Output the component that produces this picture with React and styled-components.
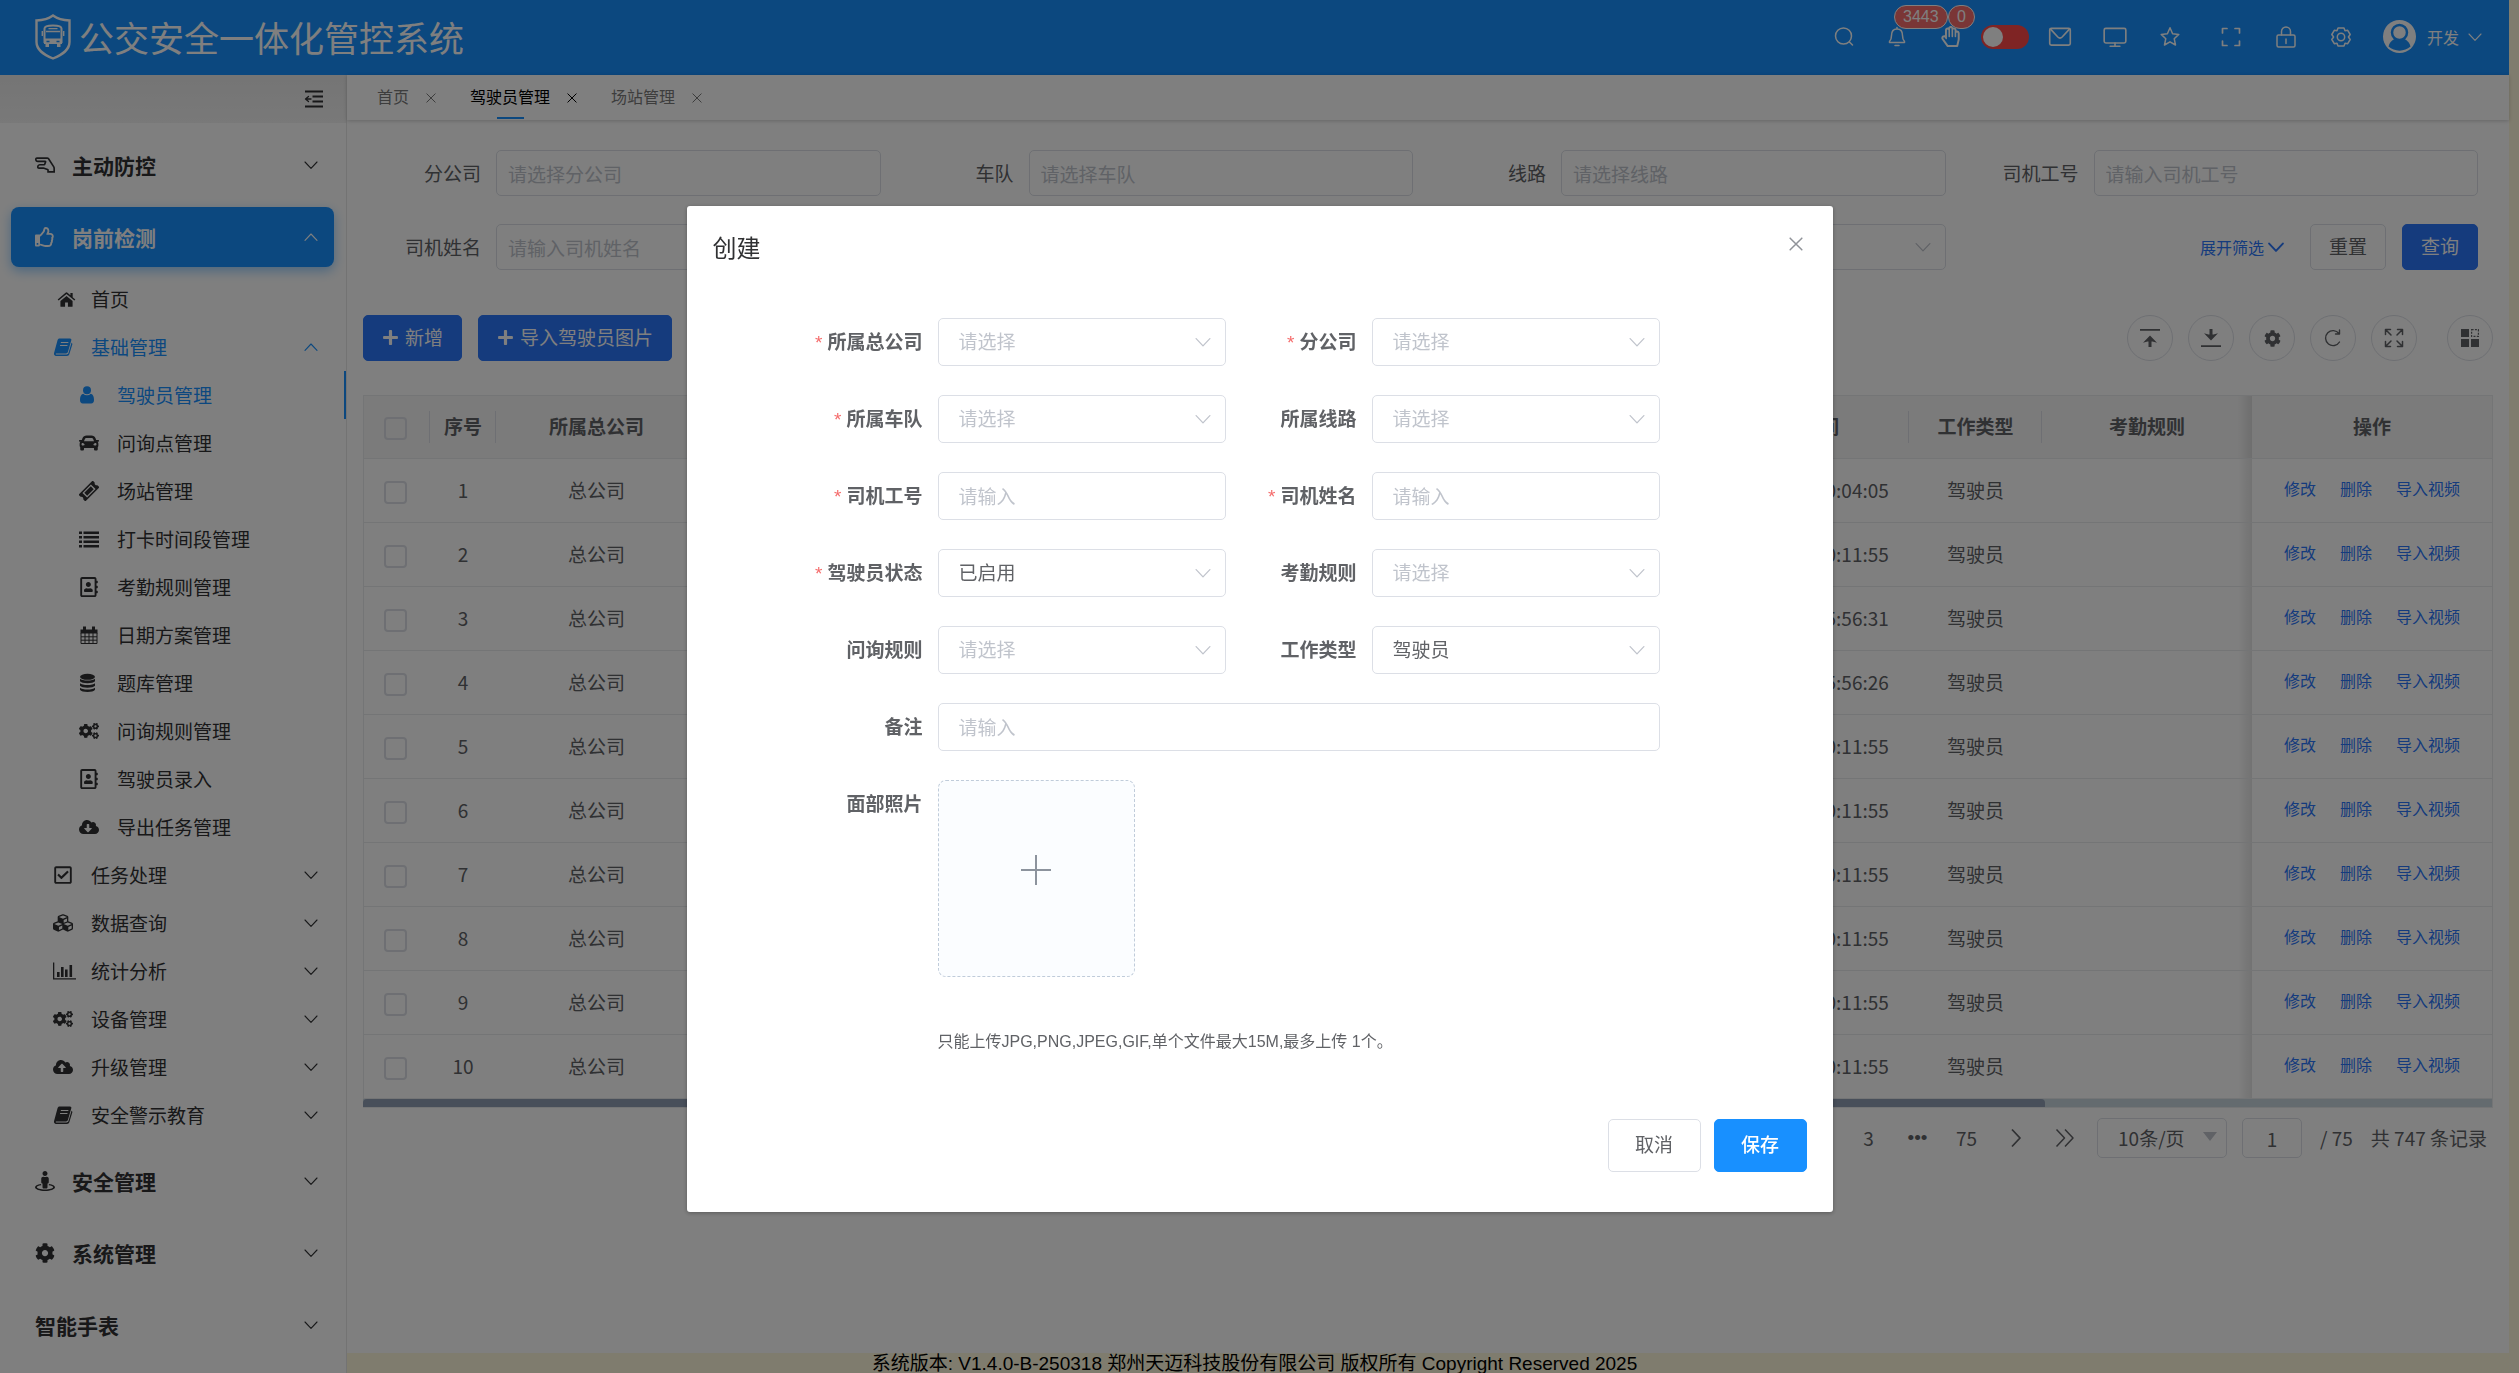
import React from "react";
import styled, { createGlobalStyle, css } from "styled-components";
import {
  FaCar, FaCogs, FaCog, FaCubes, FaStreetView, FaPlus,
  FaRegAddressBook, FaRegCheckSquare, FaRegHandLizard, FaRegHandPaper,
  FaRegThumbsUp, FaCloudDownloadAlt, FaCloudUploadAlt,
} from "react-icons/fa";

const blue = "#1890ff";
const royal = "#2a76fa";
const cjk = '"Noto Sans CJK SC", sans-serif';
const latin = '"Liberation Sans", "Noto Sans CJK SC", sans-serif';

const GlobalStyle = createGlobalStyle`
  *, *::before, *::after { box-sizing: border-box; }
  body { margin: 0; background: cornsilk; font: 19px/24px ${cjk}; color: #606266; overflow: hidden; }
  button, input, select { font: inherit; color: inherit; margin: 0; }
  button { cursor: pointer; padding: 0; border: 0; background: none; }
  a { text-decoration: none; color: inherit; }
  svg { display: block; flex: none; }
`;

/* ---------- icons ---------- */

const Line = ({ size = 24, width = 1.5, view = 24, children }) => (
  <svg width={size} height={size} viewBox={`0 0 ${view} ${view}`} fill="none" stroke="currentColor"
    strokeWidth={width} strokeLinecap="round" strokeLinejoin="round" aria-hidden="true">{children}</svg>
);
const Solid = ({ size = 20, children }) => (
  <svg width={size} height={size} viewBox="0 0 20 20" fill="currentColor" aria-hidden="true">{children}</svg>
);
const ChevronDown = ({ size = 14, width = 1.1 }) => (
  <Line size={size} view={14} width={width}><path d="M1 4l6 6.400 6-6.400" /></Line>
);
const ChevronUp = ({ size = 14 }) => (
  <Line size={size} view={14} width={1.1}><path d="M1 10.400l6-6.400 6 6.400" /></Line>
);
const Cross = ({ size = 10, width = 1.2 }) => (
  <Line size={size} view={12} width={width}><path d="M1 1l10 10M11 1L1 11" /></Line>
);
const HomeIcon = () => (
  <Solid size={19}>
    <path d="M10 6.200L3.600 11.500V17a.6.6 0 0 0 .6.600h4.300v-4.500h3v4.500h4.300a.6.6 0 0 0 .6-.6v-5.500z" />
    <path d="M19.300 10L16.500 7.600V3.200h-2.400v2.300L11 2.900a1.500 1.500 0 0 0-2 0L.7 10l1 1.100L10 4.300l8.300 6.800z" />
  </Solid>
);
const BookIcon = () => (
  <Solid>
    <path fillRule="evenodd" d="M6.500 1.500H17c1 0 1.600.8 1.300 1.700L14.900 15c-.3.900-1 1.400-1.900 1.400H3.200c-.6 0-.7.900 0 1.100h10.400c.8 0 1.500-.5 1.800-1.200l3.100-10.600c.7.400 1 1 .8 1.700L16.300 17.300c-.3.900-1.200 1.600-2.300 1.600H3.100C1.700 18.900.6 17.700 1 16.300L4.600 3c.3-.9 1-1.500 1.900-1.500zM8 5l-.3 1.100h7.500l.3-1.100zM7.200 8l-.3 1.100h7.400l.3-1.100z" />
  </Solid>
);
const UserIcon = () => (
  <Solid>
    <circle cx="8" cy="5.200" r="4" />
    <path d="M4.200 8.800C1.800 9.300 1 12 1 15c0 2.300 1 3.500 2.800 3.500h8.400c1.800 0 2.800-1.200 2.800-3.500 0-3-.8-5.700-3.200-6.200a5.400 5.400 0 0 1-7.600 0z" />
  </Solid>
);
const TicketIcon = () => (
  <Solid>
    <g transform="rotate(-45 10 10)">
      <path fillRule="evenodd" d="M0 5.200h20v3a2 2 0 0 0 0 3.600v3H0v-3a2 2 0 0 0 0-3.600zM4 6.700v6.600h12V6.700z" />
      <path d="M5.400 8h9.200v4H5.400z" />
    </g>
  </Solid>
);
const ListIcon = () => (
  <Solid><path d="M0 2.500h3V5H0zM4.500 2.500H20V5H4.500zM0 7h3v2.500H0zM4.500 7H20v2.500H4.500zM0 11.500h3V14H0zM4.500 11.500H20V14H4.500zM0 16h3v2.500H0zM4.500 16H20v2.500H4.500z" /></Solid>
);
const CalendarIcon = () => (
  <Solid>
    <path d="M1.500 4.500h17v4h-17zM4 1.500h3v4H4zM13 1.500h3v4h-3z" />
    <path fill="none" stroke="currentColor" strokeWidth="1" d="M2 8v10.500h16V8M2 11.800h16M2 15.200h16M6 8v10.500M10 8v10.500M14 8v10.500" />
  </Solid>
);
const DatabaseIcon = () => (
  <Solid>
    <ellipse cx="8.500" cy="3.800" rx="7.500" ry="3" />
    <path d="M1 5.700c2 2.400 13 2.400 15 0v2.600c-1.500 2.500-13.500 2.500-15 0zM1 10.200c2 2.400 13 2.400 15 0v2.600c-1.500 2.500-13.500 2.500-15 0zM1 14.700c2 2.400 13 2.400 15 0v2.100c-1.500 3-13.500 3-15 0z" />
  </Solid>
);
const ChartIcon = () => (
  <svg width="23" height="20" viewBox="0 0 23 20" fill="currentColor" aria-hidden="true">
    <path d="M0 1.500h1.300v15.700H23v1.300H0zM4 11h2.600v5H4zM8 6h2.600v10H8zM12 8.500h2.600V16H12zM16.500 4h2.600v12h-2.600z" />
  </svg>
);
const CollapseIcon = () => (
  <Line size={20} view={20} width={2}>
    <path strokeLinecap="butt" d="M1 2.500h18M8.500 7.500H19M8.500 12.500H19M1 17.500h18" />
    <path strokeWidth="1.300" d="M4.500 7.500L1.500 10l3 2.500M2 10h5" />
  </Line>
);
const ShieldLogo = () => (
  <svg width="36" height="46" viewBox="0 0 36 46" fill="none" stroke="currentColor" aria-hidden="true">
    <path strokeWidth="2.400" d="M18 1.500C13.500 4.800 8 6.300 1.500 6.500V28c0 8 7 12.500 16.500 16.500C27.500 40.500 34.500 36 34.500 28V6.500C28 6.300 22.500 4.800 18 1.500z" />
    <path strokeWidth="2" d="M9.500 29V14.500c0-2 1.500-3 8.500-3s8.500 1 8.500 3V29" />
    <path strokeWidth="1.400" d="M13.500 14.600h9M7.300 17v5M28.700 17v5M11 17.500h14" />
    <path fill="currentColor" stroke="none" d="M9 24.500h18V30H9zM10.500 30h3.500v3h-3.500zM22 30h3.500v3H22z" />
    <path stroke={blue} strokeWidth="1.300" d="M11.500 27.500h3M21.500 27.500h3" />
  </svg>
);
const SearchIcon = () => <Line><circle cx="11.500" cy="11" r="8" /><path d="M17.500 17l3 3" /></Line>;
const BellIcon = () => <Line><path d="M12 4c-4 0-5.500 3-5.500 6.500 0 3-.5 4.500-2 6v1h15v-1c-1.500-1.500-2-3-2-6C17.500 7 16 4 12 4zM12 4V2.500M10 20.500h4" /></Line>;
const MailIcon = () => <Line size={26}><rect x="2.500" y="4" width="19" height="15.500" rx="1.500" /><path d="M3.500 5l6.500 7c1.200 1.200 2.800 1.200 4 0l6.500-7" /></Line>;
const MonitorIcon = () => <Line size={26}><rect x="2" y="4" width="20" height="13.500" rx="1.500" /><path d="M12 17.500v2.500M7.500 20.500h9" /></Line>;
const StarIcon = () => <Line><path d="M12 2.800l2.600 5.900 6.200.7-4.600 4.300 1.300 6.300L12 16.800 6.500 20l1.300-6.300-4.600-4.300 6.200-.7z" /></Line>;
const FullIcon = () => <Line width={1.700}><path d="M3.500 8V3.500H8M16 3.500h4.500V8M20.500 16v4.500H16M8 20.500H3.500V16" /></Line>;
const LockIcon = () => <Line><rect x="3" y="10" width="18" height="12" rx="1.500" /><path d="M7.500 10V6.500a4.500 4.500 0 0 1 9 0V10M12 14v4.500" /></Line>;
const GearIcon = () => (
  <Line><circle cx="12" cy="12" r="3.700" /><path d="M9 3h6l1 2.700 2.700-.4 2.500 4.200-1.800 2.500 1.800 2.500-2.500 4.200-2.700-.4L15 21H9l-1-2.700-2.700.4-2.500-4.200L4.600 12 2.800 9.500l2.500-4.200 2.700.4z" /></Line>
);
const AvatarIcon = () => (
  <svg width="33" height="33" viewBox="0 0 33 33" aria-hidden="true">
    <circle cx="16.500" cy="16.500" r="16.500" fill="#fff" />
    <path d="M5.500 26.500c1.500-5.500 5.500-8.500 11-8.500s9.500 3 11 8.500c-6 5.500-16 5.500-22 0z" fill={blue} />
    <circle cx="16.500" cy="12.500" r="7.500" fill="#fff" stroke={blue} strokeWidth="2.500" />
  </svg>
);
const ToTopIcon = () => <Solid><path d="M0 1h20v1.800H0zM10 7.500l7 7.300-4.500-1.300h-1V19h-3v-5.500h-1L3 14.800z" /></Solid>;
const ToBottomIcon = () => <Solid><path d="M0 17.200h20V19H0zM10 12.500L3 5.200l4.500 1.300h1V1h3v5.500h1L17 5.200z" /></Solid>;
const RefreshIcon = () => <Line size={20} view={20} width={1.400}><path d="M16 5.500a7.500 7.500 0 1 0 .5 8.500M16.500 2v4h-4" /></Line>;
const ExpandIcon = () => <Line size={20} view={20} width={1.500}><path d="M1.500 6.500v-5h5M2 2l5 5M13.500 1.500h5v5M18 2l-5 5M18.500 13.500v5h-5M18 18l-5-5M6.500 18.500h-5v-5M2 18l5-5" /></Line>;
const BlocksIcon = () => (
  <Solid>
    <path d="M1 1h8v8H1zM1 11h8v8H1zM11 11h8v8h-8z" />
    <rect x="11.600" y="1.600" width="6.800" height="6.800" fill="none" stroke="currentColor" strokeWidth="1.200" strokeDasharray="2 1.300" />
  </Solid>
);
const NextIcon = () => <Line size={20} view={20} width={1.800}><path strokeLinecap="butt" d="M6 1.500l8 8.500-8 8.500" /></Line>;
const LastIcon = () => <Line size={20} view={20} width={1.500}><path strokeLinecap="butt" d="M1.500 1.500L9.500 10l-8 8.500M10 1.500L18 10l-8 8.500" /></Line>;
const PlusIcon = () => <Line size={32} view={32} width={2}><path strokeLinecap="butt" d="M1 16h30M16 1v30" /></Line>;

/* ---------- shell ---------- */

const Shell = styled.div`
  display: flex; flex-direction: column; height: 100vh; margin-right: 10px;
`;
const Header = styled.header`
  flex: none; height: 75px; padding: 0 27px 2px 35px; background: ${blue}; color: #fff;
  display: flex; align-items: center; justify-content: space-between;
`;
const Brand = styled.h1`
  margin: 0; display: flex; align-items: center; gap: 8px; font-size: 35px; font-weight: 400; line-height: 48px;
`;
const Tools = styled.div`display: flex; align-items: center;`;
const Tool = styled.button`
  position: relative; width: ${(p) => p.$w || 55}px; height: 40px; display: flex; align-items: center; justify-content: center;
`;
const ToolGroup = styled.div`display: flex; align-items: center; & + & { margin-left: 6px; }`;
const Badge = styled.span`
  position: absolute; z-index: 1; left: ${(p) => (p.$narrow ? 24 : 23)}px; top: -12px; height: 24px; padding: 0 8px;
  border: 1px solid #fff; border-radius: 12px; background: #f56c6c; font: 16px/22px ${latin};
`;
const SwitchSlot = styled.label`width: 56px; display: flex; justify-content: center;`;
const Switch = styled.input`
  appearance: none; width: 48px; height: 24px; border-radius: 12px; background: #ff4949; display: flex; align-items: center;
  &::before { content: ""; width: 20px; height: 20px; margin-left: 2px; border-radius: 50%; background: #fff; }
`;
const UserMenu = styled.button`
  display: flex; align-items: center; margin-left: 14px; font-size: 16px;
  span { margin: 0 9px 0 11px; }
`;

const Body = styled.div`flex: 1; min-height: 0; display: flex;`;
const Sidebar = styled.nav`
  flex: none; width: 347px; background: #fff; border-right: 1px solid #e6e6e6; overflow: hidden; color: #303133;
`;
const SideTop = styled.div`
  height: 48px; padding-right: 22px; display: flex; align-items: center; justify-content: flex-end;
  background: linear-gradient(#eaeaea, #f2f2f2);
`;
const Menu = styled.div`padding-top: 6px; display: flex; flex-direction: column;`;
const Group = styled.a`
  display: flex; align-items: center; height: 60px; margin: 6px 12px 6px 11px; padding: 0 16px 0 24px; border-radius: 8px;
  font-size: 21px; font-weight: 700;
  ${(p) => p.$active && css`background: ${blue}; color: #fff; box-shadow: 0 4px 12px rgba(24, 144, 255, 0.45);`}
`;
const GroupIcon = styled.span`width: 37px; font-size: 20px;`;
const Grow = styled.span`flex: 1;`;
const Sub = styled.div`padding: 2px 0 6px;`;
const Item = styled.a`
  display: flex; align-items: center; height: 48px; padding-right: 28px; padding-left: ${(p) => (p.$deep ? 79 : 53)}px;
  color: ${(p) => (p.$on ? blue : "inherit")};
  border-right: ${(p) => (p.$current ? `2px solid ${blue}` : "0 solid transparent")};
`;
const ItemIcon = styled.span`width: 38px; font-size: 20px; padding-left: ${(p) => (p.$inset ? 4 : 0)}px;`;

const Main = styled.main`flex: 1; min-width: 0; display: flex; flex-direction: column;`;
const Page = styled.div`flex: 1; min-height: 0; background: #fff;`;
const Tabs = styled.div`
  height: 45px; padding-left: 30px; display: flex; gap: 34px; box-shadow: 0 1px 4px rgba(0, 0, 0, 0.2);
`;
const Tab = styled.div`
  display: flex; align-items: center; gap: 17px; font-size: 16px; color: ${(p) => (p.$on ? "#000" : "#7a7a7a")};
`;
const TabLink = styled.a`
  height: 45px; display: flex; flex-direction: column; align-items: center; justify-content: space-between; padding-top: 9px;
  &::after { content: ""; width: 27px; height: 2px; background: ${(p) => (p.$on ? blue : "transparent")}; margin-bottom: 1px; }
`;

const Content = styled.div`padding: 30px 16px 0;`;
const Filters = styled.form`display: grid; grid-template-columns: repeat(4, 1fr); row-gap: 28px;`;
const Filter = styled.div`display: flex; align-items: center; padding-right: 15px; height: 46px;`;
const FilterLabel = styled.label`width: 118px; margin-right: 15px; text-align: right; flex: none;`;
const fieldLook = css`
  width: 100%; height: 100%; appearance: none; background: #fff; border: 1px solid #dcdfe6; border-radius: 5px; outline: 0;
  &::placeholder { color: #c0c4cc; opacity: 1; }
`;
const FilterInput = styled.input`${fieldLook} padding: 0 11px;`;
const FilterSelect = styled.select`${fieldLook} padding: 0 11px; color: #c0c4cc;`;
const SelectBox = styled.div`
  position: relative; width: 100%; height: 100%;
  svg { position: absolute; right: 15px; top: calc(50% - 8px); color: #c0c4cc; pointer-events: none; }
`;
const FilterActions = styled.div`display: flex; justify-content: flex-end; align-items: center; padding-right: 15px; gap: 16px;`;
const More = styled.button`display: flex; align-items: center; gap: 4px; margin-right: 10px; font-size: 16px; color: ${royal};`;
const FlatButton = styled.button`
  height: 46px; padding: 0 18px 2px; border: 1px solid ${(p) => (p.$primary ? royal : "#dcdfe6")}; border-radius: 5px;
  background: ${(p) => (p.$primary ? royal : "#fff")}; color: ${(p) => (p.$primary ? "#fff" : "#606266")};
`;
const Toolbar = styled.div`display: flex; align-items: center; justify-content: space-between; margin: 45px 0 34px;`;
const ButtonRow = styled.div`display: flex; gap: ${(p) => p.$gap || 16}px;`;
const AddButton = styled(FlatButton)`display: flex; align-items: center; gap: 6px; svg { font-size: 17px; }`;
const Round = styled.button`
  width: 46px; height: 46px; border-radius: 50%; border: 1px solid #dcdfe6; display: flex; align-items: center; justify-content: center;
  font-size: 17px; color: #606266;
`;

const Table = styled.table`
  width: 100%; table-layout: fixed; border-collapse: separate; border-spacing: 0;
  border: 1px solid #e8eaec; border-bottom: 0; text-align: center;
`;
const shade = "linear-gradient(to left, rgba(0,0,0,.1), transparent) right / 14px 100% no-repeat";
const Th = styled.th`
  height: 63px; padding: 0 0 2px; border-bottom: 1px solid #e8eaec; font-weight: 700;
  background: ${(p) => (p.$shade ? `${shade}, #f6f6f6` : `${p.$bar ? "linear-gradient(#dcdfe6, #dcdfe6) right / 1px 32px no-repeat, " : ""}#f6f6f6`)};
`;
const Td = styled.td`
  height: 64px; padding: 0 0 2px; border-bottom: 1px solid #e8eaec; background: ${(p) => (p.$shade ? shade : "none")};
`;
const Tick = styled.input`
  appearance: none; display: block; width: 23px; height: 23px; margin: 5px 0 0 20px; border: 2px solid #dcdfe6; border-radius: 4px;
`;
const RowLinks = styled.div`display: flex; justify-content: center; gap: 24px; font-size: 16px; color: ${royal}; padding-bottom: 4px;`;
const ScrollTrack = styled.div`height: 9px; background: #c8d6de; border: solid #e8eaec; border-width: 0 1px 1px 0;`;
const ScrollThumb = styled.div`height: 8px; width: 79%; border-radius: 4px 4px 0 0; background: #909eb4;`;
const Pager = styled.div`display: flex; align-items: center; justify-content: flex-end; height: 40px; margin-top: 10px; padding-right: 6px;`;
const PageButton = styled.button`width: 49px; height: 40px; display: flex; align-items: center; justify-content: center;`;
const Dots = styled(PageButton)`font-family: ${latin};`;
const PageSize = styled.select`
  appearance: none; width: 130px; height: 40px; padding: 0 20px; border: 1px solid #dcdfe6; border-radius: 5px; background: #fff;
`;
const SizeBox = styled.div`
  position: relative; margin: 0 15px 0 8px;
  &::after {
    content: ""; position: absolute; right: 10px; top: 14px; border: solid transparent; border-width: 9px 7px 0;
    border-top-color: #c0c4cc; pointer-events: none;
  }
`;
const PageInput = styled.input`width: 60px; height: 40px; border: 1px solid #dcdfe6; border-radius: 5px; text-align: center;`;
const PageText = styled.span`margin-left: 18px;`;

const Footer = styled.footer`
  height: 20px; padding-right: 347px; text-align: center; font-family: ${latin}; line-height: 22px; color: #000;
  white-space: nowrap; overflow: hidden;
`;

/* ---------- dialog ---------- */

const Backdrop = styled.div`position: fixed; z-index: 10; inset: 0; background: rgba(0, 0, 0, 0.5); padding-top: 15vh;`;
const Dialog = styled.section`
  width: 1146px; max-width: calc(100% - 32px); margin: 0 auto; background: #fff; border-radius: 3px; box-shadow: 0 1px 4px rgba(0, 0, 0, 0.3);
`;
const DialogHead = styled.div`
  display: flex; align-items: flex-start; justify-content: space-between; padding: 25px 30px 0 26px; color: #909399;
  h2 { margin: 0; font-size: 24px; font-weight: 400; line-height: 32px; color: #303133; }
  button { padding-top: 6px; }
`;
const Form = styled.form`
  display: grid; grid-template-columns: 1fr 1fr; row-gap: 29px; padding: 55px 173px 0 105px;
`;
const Field = styled.div`display: flex; align-items: flex-start; grid-column: ${(p) => (p.$wide ? "1 / -1" : "auto")};`;
const FieldLabel = styled.label`
  flex: none; width: 146px; padding-right: 15px; text-align: right; font-weight: 700; line-height: 46px;
  ${(p) => p.$required && css`&::before { content: "*"; margin-right: 5px; color: #f56c6c; font: 19px/24px ${latin}; }`}
`;
const Control = styled.div`flex: 1; height: 48px;`;
const TextInput = styled.input`${fieldLook} padding: 0 20px 1px;`;
const Select = styled.select`${fieldLook} padding: 0 20px 1px; color: ${(p) => (p.$empty ? "#c0c4cc" : "inherit")};`;
const Upload = styled.button`
  width: 197px; height: 197px; padding-bottom: 16px; border: 1px dashed #c0ccda; border-radius: 8px; background: #fbfdff; color: #8c939d;
  display: flex; align-items: center; justify-content: center;
`;
const Hint = styled.p`margin: 53px 0 0; font: 16px/24px ${latin};`;
const DialogFoot = styled.div`display: flex; justify-content: flex-end; gap: 13px; padding: 65px 26px 40px;`;
const DialogButton = styled.button`
  width: 93px; height: 53px; border-radius: 5px; border: 1px solid ${(p) => (p.$primary ? blue : "#dcdfe6")};
  background: ${(p) => (p.$primary ? blue : "#fff")}; color: ${(p) => (p.$primary ? "#fff" : "inherit")};
  padding-bottom: 2px; font-weight: ${(p) => (p.$primary ? 500 : 400)};
`;

/* ---------- data ---------- */

const deepItems = [
  ["驾驶员管理", UserIcon], ["问询点管理", FaCar], ["场站管理", TicketIcon], ["打卡时间段管理", ListIcon],
  ["考勤规则管理", FaRegAddressBook], ["日期方案管理", CalendarIcon], ["题库管理", DatabaseIcon],
  ["问询规则管理", FaCogs], ["驾驶员录入", FaRegAddressBook], ["导出任务管理", FaCloudDownloadAlt],
];
const subItems = [
  ["任务处理", FaRegCheckSquare], ["数据查询", FaCubes], ["统计分析", ChartIcon],
  ["设备管理", FaCogs], ["升级管理", FaCloudUploadAlt], ["安全警示教育", BookIcon],
];
const times = ["10:04:05", "10:11:55", "15:56:31", "15:56:26", "10:11:55", "10:11:55", "10:11:55", "10:11:55", "10:11:55", "10:11:55"];
const fields = [
  { label: "所属总公司", required: true, select: true }, { label: "分公司", required: true, select: true },
  { label: "所属车队", required: true, select: true }, { label: "所属线路", select: true },
  { label: "司机工号", required: true }, { label: "司机姓名", required: true },
  { label: "驾驶员状态", required: true, select: true, value: "已启用" }, { label: "考勤规则", select: true },
  { label: "问询规则", select: true }, { label: "工作类型", select: true, value: "驾驶员" },
  { label: "备注", wide: true },
];
const roundTools = [ToTopIcon, ToBottomIcon, FaCog, RefreshIcon, ExpandIcon];

const MenuGroup = ({ icon: Icon, label, active }) => (
  <Group href="#" $active={active}>
    {Icon && <GroupIcon><Icon /></GroupIcon>}
    <Grow>{label}</Grow>
    {active ? <ChevronUp /> : <ChevronDown />}
  </Group>
);

const FilterField = ({ id, label, placeholder }) => (
  <Filter>
    <FilterLabel htmlFor={id}>{label}</FilterLabel>
    <FilterInput id={id} placeholder={placeholder} />
  </Filter>
);

const FormField = ({ id, label, required, select, value, wide }) => (
  <Field $wide={wide}>
    <FieldLabel htmlFor={id} $required={required}>{label}</FieldLabel>
    <Control>
      {select ? (
        <SelectBox>
          <Select id={id} $empty={!value}><option>{value || "请选择"}</option></Select>
          <ChevronDown size={16} />
        </SelectBox>
      ) : <TextInput id={id} placeholder="请输入" />}
    </Control>
  </Field>
);

export default function App() {
  return (
    <>
      <GlobalStyle />
      <Shell>
        <Header>
          <Brand><ShieldLogo />公交安全一体化管控系统</Brand>
          <Tools>
            <ToolGroup>
              <Tool $w={53}><SearchIcon /></Tool>
              <Tool $w={53}><BellIcon /><Badge>3443</Badge></Tool>
              <Tool $w={53}><FaRegHandPaper size={21} /><Badge $narrow>0</Badge></Tool>
              <SwitchSlot><Switch type="checkbox" role="switch" aria-label="开关" /></SwitchSlot>
              <Tool><MailIcon /></Tool>
              <Tool><MonitorIcon /></Tool>
              <Tool><StarIcon /></Tool>
            </ToolGroup>
            <ToolGroup>
              <Tool><FullIcon /></Tool>
              <Tool><LockIcon /></Tool>
              <Tool><GearIcon /></Tool>
            </ToolGroup>
            <UserMenu><AvatarIcon /><span>开发</span><ChevronDown /></UserMenu>
          </Tools>
        </Header>
        <Body>
          <Sidebar>
            <SideTop><button aria-label="收起"><CollapseIcon /></button></SideTop>
            <Menu>
              <MenuGroup icon={FaRegHandLizard} label="主动防控" />
              <MenuGroup icon={FaRegThumbsUp} label="岗前检测" active />
              <Sub>
                <Item href="#"><ItemIcon $inset><HomeIcon /></ItemIcon>首页</Item>
                <Item href="#" $on><ItemIcon><BookIcon /></ItemIcon><Grow>基础管理</Grow><ChevronUp /></Item>
                {deepItems.map(([label, Icon], i) => (
                  <Item href="#" key={label} $deep $on={i === 0} $current={i === 0}>
                    <ItemIcon><Icon /></ItemIcon>{label}
                  </Item>
                ))}
                {subItems.map(([label, Icon]) => (
                  <Item href="#" key={label}><ItemIcon><Icon /></ItemIcon><Grow>{label}</Grow><ChevronDown /></Item>
                ))}
              </Sub>
              <MenuGroup icon={FaStreetView} label="安全管理" />
              <MenuGroup icon={FaCog} label="系统管理" />
              <MenuGroup label="智能手表" />
            </Menu>
          </Sidebar>
          <Main>
            <Page>
              <Tabs>
                {["首页", "驾驶员管理", "场站管理"].map((t, i) => (
                  <Tab key={t} $on={i === 1}>
                    <TabLink href="#" $on={i === 1}>{t}</TabLink>
                    <button aria-label={`关闭${t}`}><Cross /></button>
                  </Tab>
                ))}
              </Tabs>
              <Content>
                <Filters>
                  <FilterField id="q-branch" label="分公司" placeholder="请选择分公司" />
                  <FilterField id="q-team" label="车队" placeholder="请选择车队" />
                  <FilterField id="q-line" label="线路" placeholder="请选择线路" />
                  <FilterField id="q-no" label="司机工号" placeholder="请输入司机工号" />
                  <FilterField id="q-name" label="司机姓名" placeholder="请输入司机姓名" />
                  <Filter />
                  <Filter>
                    <FilterLabel htmlFor="q-type" />
                    <SelectBox><FilterSelect id="q-type"><option /></FilterSelect><ChevronDown size={16} /></SelectBox>
                  </Filter>
                  <FilterActions>
                    <More type="button">展开筛选<ChevronDown size={16} width={1.700} /></More>
                    <FlatButton type="button">重置</FlatButton>
                    <FlatButton type="button" $primary>查询</FlatButton>
                  </FilterActions>
                </Filters>
                <Toolbar>
                  <ButtonRow>
                    <AddButton $primary><FaPlus />新增</AddButton>
                    <AddButton $primary><FaPlus />导入驾驶员图片</AddButton>
                  </ButtonRow>
                  <ButtonRow $gap={30}>
                    <ButtonRow $gap={15}>{roundTools.map((Icon, i) => <Round key={i}><Icon /></Round>)}</ButtonRow>
                    <Round><BlocksIcon /></Round>
                  </ButtonRow>
                </Toolbar>
                <Table>
                  <colgroup>
                    <col width="66" /><col width="66" /><col width="201" /><col /><col width="216" />
                    <col width="133" /><col width="210" /><col width="240" />
                  </colgroup>
                  <thead>
                    <tr>
                      <Th $bar><Tick type="checkbox" aria-label="全选" /></Th>
                      <Th $bar>序号</Th>
                      <Th $bar>所属总公司</Th>
                      <Th $bar />
                      <Th $bar>更新时间</Th>
                      <Th $bar>工作类型</Th>
                      <Th $shade>考勤规则</Th>
                      <Th>操作</Th>
                    </tr>
                  </thead>
                  <tbody>
                    {times.map((t, i) => (
                      <tr key={i}>
                        <Td><Tick type="checkbox" aria-label={`选择 ${i + 1}`} /></Td>
                        <Td>{i + 1}</Td>
                        <Td>总公司</Td>
                        <Td />
                        <Td>2025-03-18 {t}</Td>
                        <Td>驾驶员</Td>
                        <Td $shade />
                        <Td><RowLinks><a href="#">修改</a><a href="#">删除</a><a href="#">导入视频</a></RowLinks></Td>
                      </tr>
                    ))}
                  </tbody>
                </Table>
                <ScrollTrack><ScrollThumb /></ScrollTrack>
                <Pager>
                  <PageButton>3</PageButton>
                  <Dots>•••</Dots>
                  <PageButton>75</PageButton>
                  <PageButton aria-label="下一页"><NextIcon /></PageButton>
                  <PageButton aria-label="末页"><LastIcon /></PageButton>
                  <SizeBox><PageSize aria-label="每页条数"><option>10条/页</option></PageSize></SizeBox>
                  <PageInput aria-label="页码" defaultValue="1" />
                  <PageText>/ 75</PageText>
                  <PageText>共 747 条记录</PageText>
                </Pager>
              </Content>
            </Page>
            <Footer>系统版本: V1.4.0-B-250318 郑州天迈科技股份有限公司 版权所有 Copyright Reserved 2025</Footer>
          </Main>
        </Body>
      </Shell>
      <Backdrop>
        <Dialog role="dialog" aria-modal="true" aria-labelledby="dialog-title">
          <DialogHead>
            <h2 id="dialog-title">创建</h2>
            <button aria-label="关闭"><Cross size={14} width={1.300} /></button>
          </DialogHead>
          <Form>
            {fields.map((f, i) => <FormField key={f.label} id={`f-${i}`} {...f} />)}
            <Field $wide>
              <FieldLabel htmlFor="f-photo">面部照片</FieldLabel>
              <div>
                <Upload type="button" id="f-photo" aria-label="上传面部照片"><PlusIcon /></Upload>
                <Hint>只能上传JPG,PNG,JPEG,GIF,单个文件最大15M,最多上传 1个。</Hint>
              </div>
            </Field>
          </Form>
          <DialogFoot>
            <DialogButton>取消</DialogButton>
            <DialogButton $primary>保存</DialogButton>
          </DialogFoot>
        </Dialog>
      </Backdrop>
    </>
  );
}
